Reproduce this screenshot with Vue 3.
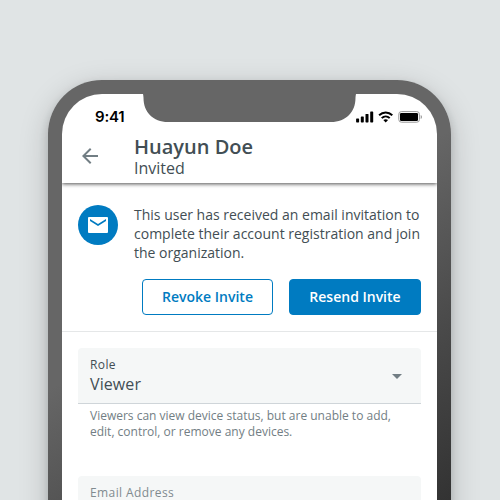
<script setup>
const bars = [4, 6, 8.5, 11]
</script>

<template>
  <main class="stage">
    <div class="phone">
      <div class="screen">
        <div class="notch">
          <svg width="213" height="28" viewBox="0 0 213 28"><path d="M0 0H213C212.6 2 212.5 3 212.5 4C212.5 18 203 28 188 28H25C10 28 .5 18 .5 4C.5 3 .4 2 0 0Z" fill="#666" /></svg>
        </div>
        <div class="top">
          <div class="status">
            <span class="time">9:41</span>
            <div class="indicators">
              <svg width="18" height="12" viewBox="0 0 18 12">
                <rect v-for="(h, i) in bars" :key="h" :x="i * 4.7 + .1" :y="11.4 - h" width="3" :height="h" rx=".7" />
              </svg>
              <svg class="wifi" width="16" height="12" viewBox="0 0 16 12">
                <path d="M1.1 4.2C5 .5 10.4 .5 14.3 4.2M3.7 7.1C6 4.9 9.4 4.9 11.7 7.1" fill="none" stroke="#000" stroke-width="2" />
                <path d="M5.3 9.1Q7.7 7.3 10.1 9.1L7.7 11.5Z" />
              </svg>
              <svg class="battery" width="25" height="12" viewBox="0 0 25 12">
                <rect x=".8" y=".6" width="20.6" height="10.6" rx="2.6" fill="none" stroke="#999" />
                <rect x="2" y="2" width="18" height="8" rx="1.2" />
                <path d="M22.7 4Q24 4.6 24 6T22.7 8Z" fill="#999" />
              </svg>
            </div>
          </div>
          <header class="bar">
            <svg class="back" width="24" height="24" viewBox="0 0 24 24"><path d="M20 11H7.83l5.59-5.59L12 4l-8 8 8 8 1.41-1.41L7.83 13H20v-2z" fill="#727e84" /></svg>
            <div>
              <h1>Huayun Doe</h1>
              <p class="subtitle">Invited</p>
            </div>
          </header>
        </div>
        <section class="invite">
          <div class="message">
            <span class="avatar">
              <svg width="24" height="24" viewBox="0 0 24 24"><path d="M21 4H3Q2 4 2 5V19Q2 20 3 20H21Q22 20 22 19V5Q22 4 21 4zM20 8l-8 5-8-5V6l8 5 8-5v2z" fill="#fff" /></svg>
            </span>
            <p>This user has received an email invitation to<br>complete their account registration and join<br>the organization.</p>
          </div>
          <div class="actions">
            <button class="outlined">Revoke Invite</button>
            <button class="filled">Resend Invite</button>
          </div>
        </section>
        <section class="form">
          <div class="field">
            <div>
              <label>Role</label>
              <div class="value">Viewer</div>
            </div>
            <svg class="caret" width="24" height="24" viewBox="0 0 24 24"><path d="M7 10l5 5 5-5z" fill="#727e84" /></svg>
          </div>
          <p class="helper">Viewers can view device status, but are unable to add,<br>edit, control, or remove any devices.</p>
          <div class="field email">
            <div>
              <label>Email Address</label>
            </div>
          </div>
        </section>
      </div>
    </div>
  </main>
</template>

<style>
body { margin: 0; }
</style>

<style scoped>
.stage {
  width: 500px;
  height: 500px;
  box-sizing: border-box;
  padding: 80px 49px 0 48px;
  overflow: hidden;
  background: #e0e4e5;
  font-family: "Open Sans", sans-serif;
  color: #424e54;
}
h1, p { margin: 0; }
svg { display: block; flex: none; }
.phone {
  height: 840px;
  box-sizing: border-box;
  padding: 14px;
  border-radius: 54px;
  background: linear-gradient(147deg, #666 260px, #484848 432px, #333 570px);
  box-shadow: 0 4px 10px rgba(0, 0, 0, .16), 0 8px 30px rgba(0, 0, 0, .18);
}
.screen {
  position: relative;
  height: 812px;
  border-radius: 40px;
  overflow: hidden;
  background: #fff;
}
.notch { position: absolute; top: 0; left: 81px; }
.top { box-shadow: 0 1px 4px rgba(0, 0, 0, .7); }
.status {
  height: 44px;
  box-sizing: border-box;
  padding: 13px 14px 0 33px;
  display: flex;
  justify-content: space-between;
}
.time {
  font: 600 15px/20px Inter, sans-serif;
  letter-spacing: -.2px;
  color: #000;
}
.indicators { display: flex; padding-top: 4px; }
.wifi { margin-left: 4px; }
.battery { margin-left: 4px; }
.bar {
  height: 45px;
  display: flex;
  padding-left: 16px;
}
.back { margin: 6px 32px 0 0; }
h1 {
  font-size: 20px;
  line-height: 24px;
  font-weight: 600;
  margin-top: -3px;
}
.subtitle { font-size: 16px; line-height: 20px; margin-top: -1px; }
.invite {
  height: 126px;
  padding: 22px 16px 0;
  border-bottom: 1px solid #e5e7e8;
}
.message {
  display: flex;
  gap: 16px;
  font-size: 14px;
  line-height: 19px;
  white-space: nowrap;
}
.avatar {
  width: 40px;
  height: 40px;
  border-radius: 50%;
  background: #007bc1;
  display: grid;
  place-items: center;
  flex: none;
}
.actions { display: flex; justify-content: flex-end; gap: 16px; margin-top: 17px; }
button {
  height: 36px;
  box-sizing: border-box;
  border: 1px solid #007bc1;
  border-radius: 4px;
  font: 600 14px/20px "Open Sans", sans-serif;
  padding: 0;
  white-space: nowrap;
}
.outlined { width: 131px; background: #fff; color: #007bc1; }
.filled { width: 132px; background: #007bc1; color: #fff; }
.form { padding: 16px 16px 0; }
.field {
  height: 56px;
  box-sizing: border-box;
  padding: 8px 12px 0;
  display: flex;
  justify-content: space-between;
  background: #f5f7f7;
  border-radius: 4px 4px 0 0;
  border-bottom: 1px solid #cfd5d9;
}
label { display: block; font-size: 12px; line-height: 18px; letter-spacing: .4px; }
.value { font-size: 16px; line-height: 20px; letter-spacing: .1px; }
.caret { margin-top: 8px; }
.helper {
  padding: 4px 12px 0;
  font-size: 12px;
  line-height: 16px;
  color: #727e84;
  white-space: nowrap;
}
.email { margin-top: 36px; }
.email label { color: #818b90; }
</style>
